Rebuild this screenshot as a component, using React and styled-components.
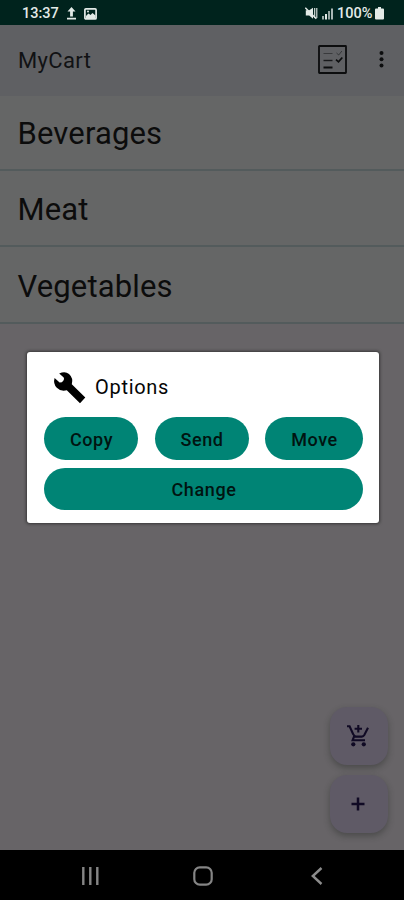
import React from "react";
import styled, { createGlobalStyle } from "styled-components";

const GlobalStyle = createGlobalStyle`
  * { box-sizing: border-box; }
  body { margin: 0; background: #000; font-family: Roboto, sans-serif; }
`;

const Screen = styled.div`
  position: relative;
  width: 404px;
  height: 900px;
  display: flex;
  flex-direction: column;
  overflow: hidden;
  background: #676467;
`;

const StatusBar = styled.header`
  height: 25px;
  flex: none;
  display: flex;
  align-items: center;
  justify-content: space-between;
  padding: 2px 20px 0 22px;
  background: #00231d;
  color: #e3eae7;
  font-size: 14.5px;
  font-weight: 500;
`;

const StatusGroup = styled.div`
  display: flex;
  align-items: center;
  gap: ${(p) => p.$gap}px;
`;

const StatusText = styled.span`
  display: block;
  width: ${(p) => p.$width}px;
  white-space: nowrap;
`;

const AppBar = styled.div`
  height: 71px;
  flex: none;
  display: flex;
  align-items: center;
  padding: 0 15px 0 18px;
  background: #5f6063;
`;

const AppTitle = styled.h1`
  flex: 1;
  margin: 0;
  color: #111214;
  font-size: 22px;
  line-height: 28px;
  font-weight: 400;
  letter-spacing: 0.35px;
`;

const Actions = styled.div`
  display: flex;
  align-items: center;
  gap: 26px;
  padding-bottom: 3px;
`;

const List = styled.ul`
  flex: none;
  margin: 0;
  padding: 0;
  list-style: none;
`;

const ListRow = styled.li`
  height: 76px;
  padding: 2px 18px 0 17.5px;
  display: flex;
  align-items: center;
  background: #656666;
  border-bottom: 2px solid #535b5c;
  color: #0c0c0c;
  font-size: 31px;
  letter-spacing: 0.15px;
  &:first-child { height: 75px; }
  &:last-child { height: 77px; padding-top: 3px; }
`;

const Body = styled.main`
  flex: 1;
  display: flex;
  flex-direction: column;
  align-items: flex-end;
  justify-content: flex-end;
  gap: 10px;
  padding: 0 16px 17px;
`;

const Fab = styled.button`
  width: 58px;
  height: 58px;
  padding: 0 2px 0 0;
  border: 0;
  border-radius: 17px;
  display: flex;
  align-items: center;
  justify-content: center;
  background: #5f5a66;
  box-shadow: 0 3px 6px rgba(35, 40, 35, 0.42);
`;

const NavBar = styled.nav`
  height: 50px;
  flex: none;
  display: grid;
  grid-template-columns: 1fr 1fr 1fr;
  width: 340px;
  margin-left: 33.5px;
  align-items: center;
  justify-items: center;
  padding-top: 2px;
`;

const NavArea = styled.footer`
  flex: none;
  background: #000;
`;

const Dialog = styled.section`
  position: absolute;
  top: 352px;
  left: 27px;
  width: 351.5px;
  height: 171px;
  padding: 18px 15.5px 12px 17px;
  border-radius: 3px;
  background: #fff;
  box-shadow: 0 0 3px 1px rgba(25, 25, 25, 0.6);
`;

const DialogHeader = styled.div`
  height: 47px;
  display: flex;
  align-items: flex-start;
  gap: 8px;
  padding-left: 8px;
`;

const DialogTitle = styled.h2`
  margin: 3px 0 0;
  color: #050505;
  font-size: 20px;
  line-height: 28px;
  font-weight: 400;
  letter-spacing: 0.7px;
`;

const ButtonGrid = styled.div`
  display: grid;
  grid-template-columns: 94px 94px 98px;
  column-gap: 16.5px;
  row-gap: 8px;
`;

const PillButton = styled.button`
  grid-column: ${(p) => (p.$wide ? "1 / -1" : "auto")};
  height: 42.5px;
  padding: 1.5px 0 0 1px;
  border: 0;
  border-radius: 22px;
  background: #008475;
  color: #001411;
  font: 500 18px Roboto, sans-serif;
  letter-spacing: ${(p) => (p.$wide ? 0.65 : 0.6)}px;
`;

const UploadIcon = () => (
  <svg width="9" height="13" viewBox="0 0 9 13" fill="#e3eae7">
    <path d="M4.5 0 8.5 4.5H5.9V9.5H3.1V4.5H.5ZM0 10.8h9v1.7H0Z" />
  </svg>
);

const PictureIcon = () => (
  <svg width="13" height="12" viewBox="0 0 13 12">
    <rect x=".9" y=".9" width="11.2" height="10" rx="1" fill="none" stroke="#e3eae7" strokeWidth="1.7" />
    <path d="M2 10V8l2.4-2.4 2.1 1.5 2-2.2L11.5 7.5V10Z" fill="#e3eae7" />
    <circle cx="4" cy="3.6" r="1" fill="#e3eae7" />
  </svg>
);

const MuteIcon = () => (
  <svg width="13" height="13" viewBox="0 0 13 13" fill="#e3eae7">
    <path d="M.8 3.3h3.4L8 .8v11L4.2 8.6H.8Z" />
    <path d="M9.7 1v10M11.8 1v10" fill="none" stroke="#e3eae7" strokeWidth="1.1" />
    <path d="m.3.8 11 11" stroke="#e3eae7" strokeWidth="1.5" />
  </svg>
);

const SignalIcon = () => (
  <svg width="11" height="12" viewBox="0 0 11 12" fill="#e3eae7">
    <path d="M0 8h2v3.5H0Z" opacity=".7" />
    <path d="M3 6h2v5.5H3Z" />
    <path d="M6 3h2v8.5H6Z" opacity=".65" />
    <path d="M9 .5h2v11H9Z" opacity=".75" />
  </svg>
);

const BatteryIcon = () => (
  <svg width="9" height="13" viewBox="0 0 9 13" fill="#e3eae7">
    <path d="M3 0h3v1.5h2q1 0 1 1V11.5q0 1-1 1H1q-1 0-1-1V2.5q0-1 1-1h2Z" />
  </svg>
);

const ChecklistIcon = () => (
  <svg width="29" height="29" viewBox="0 0 29 29" fill="none" stroke="#0c0d0e">
    <rect x="1" y="1" width="27" height="27" rx=".5" strokeWidth="1.8" />
    <path d="M5.5 8.5h9" strokeWidth="1" opacity=".45" />
    <path d="M5.5 15.5h9" strokeWidth="1.4" opacity=".85" />
    <path d="M5.5 22.5h9" strokeWidth="2" />
    <path d="m18.5 8 2.2 2 3.2-4" strokeWidth="1" opacity=".5" />
    <path d="m18 14.7 2.5 2.2 3.8-4.4" strokeWidth="1.7" />
  </svg>
);

const MoreIcon = () => (
  <svg width="16" height="20" viewBox="0 0 16 20" fill="#0c0d0e">
    <circle cx="8.5" cy="4" r="2" />
    <circle cx="8.5" cy="10.2" r="2" />
    <circle cx="8.5" cy="16.6" r="2" />
  </svg>
);

const WrenchIcon = () => (
  <svg width="35" height="34" viewBox="0 0 35 34" fill="#000">
    <path d="M7.2 3.6Q13 .8 17 4Q21.5 8 19.8 14.3L33.3 27.6L28 33.2L14.8 20.3Q8.6 21.8 4.8 17.8Q.9 13.6 2.6 8L7.6 12.6Q10 12.7 11.3 10.7Q12.6 8.9 11.7 7.5Z" />
  </svg>
);

const CartPlusIcon = () => (
  <svg width="22" height="24" viewBox="0 0 22 24" fill="none" stroke="#100a24" strokeWidth="2.1">
    <path d="M0 2.2H2.6L6.2 10.2Q7.2 12.6 9 12.6H14.8Q16.4 12.6 17.3 11L21 3.8M7.2 12.2 5.6 16.3H18" />
    <path d="M11.3 1v7.4M7.6 4.7h7.4" />
    <circle cx="6.3" cy="20.3" r="2.1" fill="#100a24" stroke="none" />
    <circle cx="16.8" cy="20.3" r="2.1" fill="#100a24" stroke="none" />
  </svg>
);

const PlusIcon = () => (
  <svg width="14" height="14" viewBox="0 0 14 14">
    <path d="M7 .5v13M.5 7h13" stroke="#100a24" strokeWidth="2.5" />
  </svg>
);

const RecentsIcon = () => (
  <svg width="19" height="18" viewBox="0 0 19 18">
    <path d="M2.3 0v18M9.3 0v18M16.3 0v18" stroke="#858585" strokeWidth="2.4" />
  </svg>
);

const HomeIcon = () => (
  <svg width="20" height="20" viewBox="0 0 20 20">
    <rect x="1.3" y="1.3" width="17.4" height="17.4" rx="5.5" fill="none" stroke="#858585" strokeWidth="2.2" />
  </svg>
);

const BackIcon = () => (
  <svg width="12" height="18" viewBox="0 0 12 18">
    <path d="M10.5 1 1.8 9l8.7 8" fill="none" stroke="#8c8c8c" strokeWidth="2.4" />
  </svg>
);

const categories = ["Beverages", "Meat", "Vegetables"];

export default function App() {
  return (
    <Screen>
      <GlobalStyle />
      <StatusBar>
        <StatusGroup $gap={8}>
          <StatusText $width={37}>13:37</StatusText>
          <UploadIcon />
          <PictureIcon />
        </StatusGroup>
        <StatusGroup $gap={4}>
          <MuteIcon />
          <SignalIcon />
          <StatusText $width={34}>100%</StatusText>
          <BatteryIcon />
        </StatusGroup>
      </StatusBar>
      <AppBar>
        <AppTitle>MyCart</AppTitle>
        <Actions>
          <ChecklistIcon />
          <MoreIcon />
        </Actions>
      </AppBar>
      <List>
        {categories.map((name) => (
          <ListRow key={name}>{name}</ListRow>
        ))}
      </List>
      <Body>
        <Fab aria-label="Add to cart"><CartPlusIcon /></Fab>
        <Fab aria-label="Add category"><PlusIcon /></Fab>
      </Body>
      <NavArea>
        <NavBar>
          <RecentsIcon />
          <HomeIcon />
          <BackIcon />
        </NavBar>
      </NavArea>
      <Dialog role="dialog" aria-label="Options">
        <DialogHeader>
          <WrenchIcon />
          <DialogTitle>Options</DialogTitle>
        </DialogHeader>
        <ButtonGrid>
          <PillButton>Copy</PillButton>
          <PillButton>Send</PillButton>
          <PillButton>Move</PillButton>
          <PillButton $wide>Change</PillButton>
        </ButtonGrid>
      </Dialog>
    </Screen>
  );
}
